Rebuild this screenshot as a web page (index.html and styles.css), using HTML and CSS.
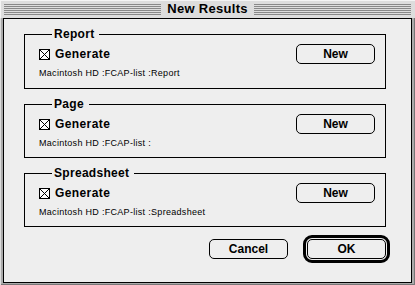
FILE: index.html
```html
<!DOCTYPE html>
<html lang="en">
<head>
    <meta charset="UTF-8">
    <title>New Results</title>
    <link rel="stylesheet" href="styles.css">
</head>
<body>
    <div class="window">
        <div class="titlebar">
            <span class="stripes"></span>
            <span class="title">New Results</span>
            <span class="stripes"></span>
        </div>
        <div class="content">
            <fieldset class="group">
                <legend>Report</legend>
                <div class="row">
                    <label class="check">
                        <svg width="11" height="11" viewBox="0 0 11 11"><rect x="0.5" y="0.5" width="10" height="10" fill="#fff" stroke="#000"/><path d="M1 1 L10 10 M10 1 L1 10" stroke="#000" stroke-width="1"/></svg>
                        Generate
                    </label>
                    <button class="btn">New</button>
                </div>
                <div class="path">Macintosh HD :FCAP-list :Report</div>
            </fieldset>
            <fieldset class="group">
                <legend>Page</legend>
                <div class="row">
                    <label class="check">
                        <svg width="11" height="11" viewBox="0 0 11 11"><rect x="0.5" y="0.5" width="10" height="10" fill="#fff" stroke="#000"/><path d="M1 1 L10 10 M10 1 L1 10" stroke="#000" stroke-width="1"/></svg>
                        Generate
                    </label>
                    <button class="btn">New</button>
                </div>
                <div class="path">Macintosh HD :FCAP-list :</div>
            </fieldset>
            <fieldset class="group">
                <legend>Spreadsheet</legend>
                <div class="row">
                    <label class="check">
                        <svg width="11" height="11" viewBox="0 0 11 11"><rect x="0.5" y="0.5" width="10" height="10" fill="#fff" stroke="#000"/><path d="M1 1 L10 10 M10 1 L1 10" stroke="#000" stroke-width="1"/></svg>
                        Generate
                    </label>
                    <button class="btn">New</button>
                </div>
                <div class="path">Macintosh HD :FCAP-list :Spreadsheet</div>
            </fieldset>
            <div class="actions">
                <button class="btn">Cancel</button>
                <span class="default-ring"><button class="btn">OK</button></span>
            </div>
        </div>
    </div>
</body>
</html>
```

FILE: styles.css
```css
body {
    margin: 0;
    font-family: "Liberation Sans", Arial, sans-serif;
    font-size: 12px;
    color: #000;
}

.window {
    width: 415px;
    height: 285px;
    box-sizing: border-box;
    padding: 0 3px 2px 3px;
    background: #aaa;
    box-shadow: inset 1px 1px #ddd, inset -1px -1px #777;
    display: flex;
    flex-direction: column;
}

.titlebar {
    height: 18px;
    display: flex;
    align-items: center;
    gap: 6px;
    background: #ddd;
    margin: 0 -3px;
    padding: 0 4px;
    box-sizing: border-box;
    box-shadow: inset 1px 1px #f4f4f4;
}

.stripes {
    flex: 1;
    height: 11px;
    background: repeating-linear-gradient(to bottom, #888 0 1px, #ddd 1px 2px);
}

.title {
    font-weight: bold;
    font-size: 13px;
    line-height: 16px;
    letter-spacing: 0.3px;
}

.content {
    flex: 1;
    border: 1px solid #000;
    background: #eee;
    padding: 8px 25px 0 20px;
    display: flex;
    flex-direction: column;
}

.group {
    margin: 0 0 8px 0;
    padding: 3px 10px 0 14px;
    border: 1px solid #000;
    height: 62px;
    box-sizing: border-box;
}

.group + .group {
    height: 61px;
}

.group legend {
    font-weight: bold;
    line-height: 14px;
    padding: 0 5px 0 2px;
    margin-left: 13px;
    letter-spacing: 0.3px;
}

.row {
    display: flex;
    justify-content: space-between;
    align-items: center;
}

.check {
    display: flex;
    align-items: center;
    gap: 5px;
    font-weight: bold;
    letter-spacing: 0.4px;
}

.check svg {
    display: block;
    shape-rendering: crispEdges;
}

.path {
    font-size: 9px;
    line-height: 11px;
    margin-top: 4px;
    letter-spacing: 0.3px;
}

.btn {
    width: 79px;
    height: 20px;
    border: 1px solid #000;
    border-radius: 5px;
    background: #eee;
    font-family: "Liberation Sans", Arial, sans-serif;
    font-weight: bold;
    font-size: 12px;
    padding: 0;
    color: #000;
}

.actions {
    display: flex;
    justify-content: flex-end;
    align-items: center;
    gap: 15px;
    margin-right: -4px;
}

.default-ring {
    display: flex;
    border: 3px solid #000;
    border-radius: 9px;
    padding: 1px;
}
```
